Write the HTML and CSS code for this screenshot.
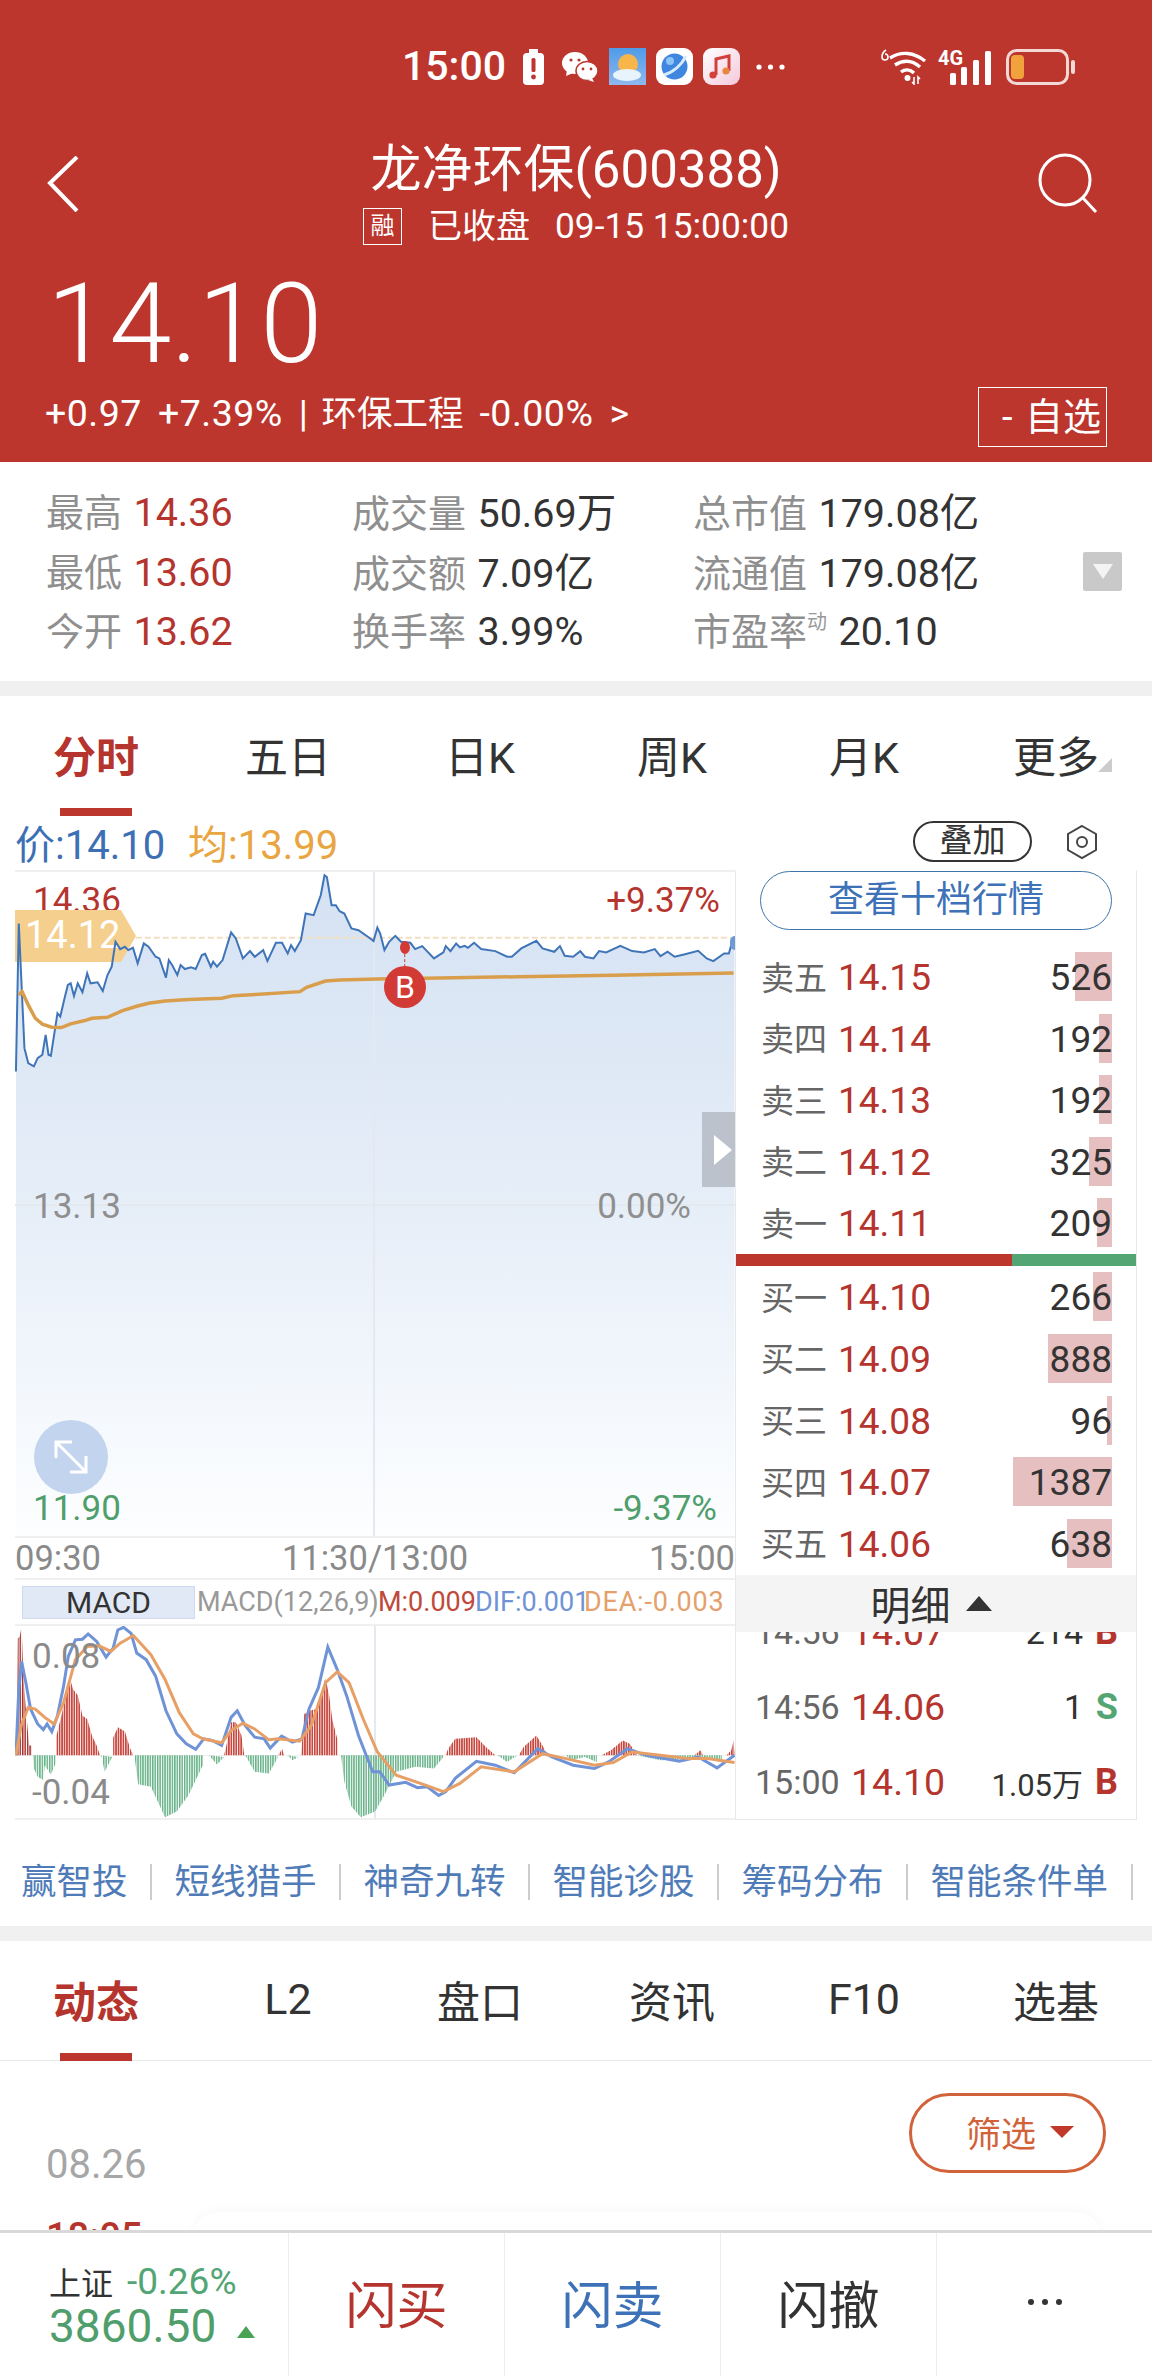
FILE: index.html
```html
<!DOCTYPE html>
<html lang="zh-CN">
<head>
<meta charset="utf-8">
<title>龙净环保(600388)</title>
<link rel="stylesheet" href="styles.css">
</head>
<body>
<div class="page">
  <header class="hero">
    <div class="status">
      <span class="clock">15:00</span>
      <svg class="ic-alert" viewBox="0 0 21 36"><rect x="0" y="4" width="21" height="32" rx="4" fill="#fff"/><rect x="6" y="0" width="9" height="4" fill="#fff"/><rect x="8.5" y="9" width="4" height="14" rx="1.5" fill="#bc362e"/><circle cx="10.5" cy="28" r="2.4" fill="#bc362e"/></svg>
      <svg class="ic-wechat" viewBox="0 0 36 30"><ellipse cx="13" cy="11" rx="13" ry="11" fill="#fff"/><path d="M5 18l-1 6 7-3z" fill="#fff"/><ellipse cx="25" cy="19" rx="11" ry="9.5" fill="#fff" stroke="#bc362e" stroke-width="1.5"/><path d="M30 26l2 4-6-2z" fill="#fff"/><circle cx="9" cy="8" r="1.6" fill="#bc362e"/><circle cx="17" cy="8" r="1.6" fill="#bc362e"/><circle cx="21" cy="17" r="1.4" fill="#bc362e"/><circle cx="29" cy="17" r="1.4" fill="#bc362e"/></svg>
      <svg class="ic-tile" viewBox="0 0 37 37"><defs><linearGradient id="sky" x1="0" y1="0" x2="0" y2="1"><stop offset="0" stop-color="#4f9be8"/><stop offset="1" stop-color="#8fb8ee"/></linearGradient></defs><rect width="37" height="37" fill="url(#sky)"/><circle cx="19" cy="16" r="10" fill="#f7b54a"/><ellipse cx="18" cy="27" rx="14" ry="6" fill="#e8f4fb"/></svg>
      <svg class="ic-tile" viewBox="0 0 37 37"><rect width="37" height="37" rx="9" fill="#fff"/><circle cx="18.5" cy="18.5" r="13" fill="#3f86e0"/><path d="M8 27C18 24 26 16 30 8" stroke="#d6ecfb" stroke-width="3" fill="none"/><circle cx="14" cy="13" r="4" fill="#8ac4f5"/></svg>
      <svg class="ic-tile" viewBox="0 0 37 37"><defs><linearGradient id="pk" x1="0" y1="0" x2="1" y2="1"><stop offset="0" stop-color="#fff"/><stop offset="1" stop-color="#f3c9dc"/></linearGradient></defs><rect width="37" height="37" rx="9" fill="url(#pk)"/><path d="M13 27V11l13-3v15" stroke="#d2403a" stroke-width="3" fill="none"/><circle cx="10" cy="27" r="3.6" fill="#d2403a"/><circle cx="23" cy="23" r="3.6" fill="#e8853f"/></svg>
      <svg class="ic-dots" viewBox="0 0 29 6"><circle cx="3" cy="3" r="2.6" fill="#fff"/><circle cx="14.5" cy="3" r="2.6" fill="#fff"/><circle cx="26" cy="3" r="2.6" fill="#fff"/></svg>
      <svg class="ic-wifi" viewBox="0 0 47 36"><path d="M9 9C20 2 33 3 44 12M14 16c8-5 17-5 25 2M20 23c4-3 9-3 13 1" stroke="#fff" stroke-width="3.4" fill="none"/><circle cx="26.500" cy="29" r="3" fill="#fff"/><path d="M33 28v7l-2-2M37 35v-7l2 2" stroke="#fff" stroke-width="1.600" fill="none"/><path d="M5 1C2 3 1 6 1 8a3 3 0 1 0 3-3" stroke="#fff" stroke-width="1.600" fill="none"/></svg>
      <span class="signal"><span class="net">4G</span><svg class="ic-bars" viewBox="0 0 41 34"><rect x="0" y="22" width="6" height="12" rx="1.500" fill="#fff"/><rect x="11" y="16" width="6" height="18" rx="1.500" fill="#fff"/><rect x="23" y="9" width="6" height="25" rx="1.500" fill="#fff"/><rect x="35" y="0" width="6" height="34" rx="1.500" fill="#fff"/></svg></span>
      <svg class="ic-battery" viewBox="0 0 70 36"><rect x="1.500" y="1.500" width="60" height="33" rx="9" fill="none" stroke="#f3d9d5" stroke-width="3"/><rect x="5" y="6" width="13" height="24" rx="4" fill="#f2a23c"/><rect x="65" y="11" width="4" height="14" rx="2" fill="#f3d9d5"/></svg>
    </div>
    <div class="nav">
      <svg class="ic-back" viewBox="0 0 33 56"><path d="M30 1L3 27l27 28" stroke="#fff" stroke-width="4" fill="none"/></svg>
      <div class="nav-mid">
        <h1 class="title">龙净环保(600388)</h1>
        <div class="sub"><span class="rong">融</span><span class="sub-state">已收盘</span><span class="sub-time">09-15 15:00:00</span></div>
      </div>
      <svg class="ic-search" viewBox="0 0 60 60"><circle cx="27" cy="27" r="25" stroke="#fff" stroke-width="3" fill="none"/><path d="M45 45l13 14" stroke="#fff" stroke-width="3"/></svg>
    </div>
    <div class="price">14.10</div>
    <div class="change-row">
      <span class="change"><span>+0.97</span><span>+7.39%</span><span>|</span><span class="change-cjk">环保工程</span><span>-0.00%</span><span>&gt;</span></span>
      <span class="watch">- 自选</span>
    </div>
  </header>

  <section class="stats">
    <div class="stats-grid">
      <div><span class="lab">最高</span> <span class="up">14.36</span></div>
      <div><span class="lab">成交量</span> <span class="val">50.69万</span></div>
      <div><span class="lab">总市值</span> <span class="val">179.08亿</span></div>
      <div><span class="lab">最低</span> <span class="up">13.60</span></div>
      <div><span class="lab">成交额</span> <span class="val">7.09亿</span></div>
      <div><span class="lab">流通值</span> <span class="val">179.08亿</span></div>
      <div><span class="lab">今开</span> <span class="up">13.62</span></div>
      <div><span class="lab">换手率</span> <span class="val">3.99%</span></div>
      <div><span class="lab">市盈率</span><sup class="sup">动</sup> <span class="val">20.10</span></div>
    </div>
    <div class="stats-more"><i class="tri-down"></i></div>
  </section>
  <div class="band"></div>

  <nav class="tabs">
    <span class="tab active">分时</span><span class="tab">五日</span><span class="tab">日K</span><span class="tab">周K</span><span class="tab">月K</span><span class="tab more">更多</span>
  </nav>

  <div class="legend">
    <span class="leg-price">价:14.10</span>
    <span class="leg-avg">均:13.99</span>
    <span class="overlay-btn">叠加</span>
    <svg class="ic-hex" viewBox="0 0 34 36"><path d="M17 2l14 8v16l-14 8-14-8V10z" fill="none" stroke="#444" stroke-width="2"/><circle cx="17" cy="18" r="5" fill="none" stroke="#444" stroke-width="2"/></svg>
  </div>

  <div class="board">
    <div class="left">
      <div class="main-chart">
        <svg class="plot" viewBox="32 30 1526 1998" preserveAspectRatio="none">
          <defs>
            <linearGradient id="area" gradientUnits="userSpaceOnUse" x1="0" y1="40" x2="0" y2="2028"><stop offset="0" stop-color="#d5e2f3"/><stop offset=".5" stop-color="#e6eef8"/><stop offset="1" stop-color="#fdfeff"/></linearGradient>
          </defs>
          <polygon fill="url(#area)" points="34,2028 34,630 40,185 52,560 60,605 72,615 80,590 90,580 97,520 103,580 108,583 122,455 128,465 137,410 144,370 150,365 157,403 165,365 175,392 185,335 192,365 207,362 218,388 228,340 237,315 245,240 255,262 265,255 272,265 282,258 292,305 305,245 315,255 330,285 338,290 352,348 358,295 365,310 376,340 383,310 392,322 405,317 415,322 428,280 435,276 447,315 452,300 460,315 472,295 490,212 500,230 515,290 530,268 540,285 558,265 567,298 585,243 598,243 610,275 617,250 625,268 638,235 648,155 665,160 680,100 688,40 693,45 703,130 712,130 720,148 730,155 745,200 760,205 785,230 792,238 800,197 806,215 815,265 825,240 838,222 850,240 870,243 880,262 895,253 920,290 940,272 945,253 955,268 967,245 975,257 985,252 992,258 1005,243 1020,262 1050,268 1075,285 1085,285 1105,260 1137,237 1150,260 1175,270 1187,253 1197,282 1215,285 1230,268 1240,285 1258,290 1270,268 1285,272 1315,252 1340,268 1365,272 1388,262 1400,283 1415,270 1430,285 1450,278 1480,267 1498,290 1512,298 1535,275 1545,275 1552,240 1557,235 1557,2028"/>
          <path class="grid-line" d="M32 1032H1558M793 30V2028"/>
          <path class="dash-line" d="M288 228H1557"/>
        </svg>
        <span class="chart-lab top-left up">14.36</span>
        <span class="chart-lab top-right up">+9.37%</span>
        <span class="chart-lab mid-left grey">13.13</span>
        <span class="chart-lab mid-right grey">0.00%</span>
        <span class="chart-lab low-left down">11.90</span>
        <span class="chart-lab low-right down">-9.37%</span>
        <span class="price-tag">14.12</span>
        <svg class="plot plot-over" viewBox="32 30 1526 1998" preserveAspectRatio="none">
          <polyline class="line-price" points="34,630 40,185 52,560 60,605 72,615 80,590 90,580 97,520 103,580 108,583 122,455 128,465 137,410 144,370 150,365 157,403 165,365 175,392 185,335 192,365 207,362 218,388 228,340 237,315 245,240 255,262 265,255 272,265 282,258 292,305 305,245 315,255 330,285 338,290 352,348 358,295 365,310 376,340 383,310 392,322 405,317 415,322 428,280 435,276 447,315 452,300 460,315 472,295 490,212 500,230 515,290 530,268 540,285 558,265 567,298 585,243 598,243 610,275 617,250 625,268 638,235 648,155 665,160 680,100 688,40 693,45 703,130 712,130 720,148 730,155 745,200 760,205 785,230 792,238 800,197 806,215 815,265 825,240 838,222 850,240 870,243 880,262 895,253 920,290 940,272 945,253 955,268 967,245 975,257 985,252 992,258 1005,243 1020,262 1050,268 1075,285 1085,285 1105,260 1137,237 1150,260 1175,270 1187,253 1197,282 1215,285 1230,268 1240,285 1258,290 1270,268 1285,272 1315,252 1340,268 1365,272 1388,262 1400,283 1415,270 1430,285 1450,278 1480,267 1498,290 1512,298 1535,275 1545,275 1552,240"/>
          <polyline class="line-avg" points="40,400 47,390 60,430 75,470 90,488 110,497 130,498 150,487 180,477 195,470 228,467 260,447 290,434 315,425 350,418 400,414 470,410 495,402 550,398 636,390 650,377 690,358 720,355 800,352 900,350 1100,345 1300,341 1555,334"/>
          <path class="marker-stem" d="M858 262V320"/>
        </svg>
        <i class="end-dot"></i>
        <i class="marker-dot"></i>
        <span class="marker-b">B</span>
        <span class="side-tab"><i class="tri-right"></i></span>
        <svg class="ic-expand" viewBox="0 0 74 74"><circle cx="37" cy="37" r="37" fill="#c3d5ee"/><path d="M22 38V22h16M22 22l30 30M52 36v16H36" stroke="#fff" stroke-width="3" fill="none"/></svg>
      </div>
      <div class="times"><span>09:30</span><span>11:30/13:00</span><span>15:00</span></div>
      <div class="macd-head">
        <span class="macd-tab">MACD</span>
        <span class="m-grey">MACD(12,26,9)</span><span class="m-red">M:0.009</span><span class="m-blue">DIF:0.001</span><span class="m-orange">DEA:-0.003</span>
      </div>
      <div class="macd-plot">
        <svg class="plot" viewBox="32 258 1526 582" preserveAspectRatio="none">
          <defs>
            <pattern id="barDark" patternUnits="userSpaceOnUse" width="5.200" height="10"><rect width="3.200" height="10" fill="#a8322e"/></pattern>
            <pattern id="barRed" patternUnits="userSpaceOnUse" width="5.200" height="10"><rect width="3.600" height="10" fill="#c8483f"/></pattern>
            <pattern id="barGreen" patternUnits="userSpaceOnUse" width="5.200" height="10"><rect width="3.200" height="10" fill="#67b388"/></pattern>
          </defs>
          <path class="grid-line" d="M795 258V840"/>
          <path class="zero-line" d="M32 651H1558"/>
          <polygon fill="url(#barDark)" points="36,650 38,295 42,290 46,260 50,420 56,525 62,620 68,620 68,650"/>
          <g fill="url(#barRed)">
            <polygon points="120,650 120,590 132,520 142,440 148,415 155,450 165,468 175,530 185,540 195,590 205,620 212,650"/>
            <polygon points="240,650 240,597 250,565 265,578 275,625 282,650"/>
            <polygon points="475,650 480,620 490,550 500,550 512,590 518,650"/>
            <polygon points="590,650 598,630 602,650"/>
            <polygon points="638,650 645,525 660,513 672,510 680,470 690,415 698,470 705,545 715,600 715,650"/>
            <polygon points="945,650 950,630 965,600 1010,595 1030,625 1050,650"/>
            <polygon points="1100,650 1110,625 1137,590 1150,620 1160,650"/>
            <polygon points="1275,650 1295,635 1320,605 1335,615 1350,650"/>
            <polygon points="1472,650 1485,635 1490,650"/>
            <polygon points="1540,650 1550,635 1555,605 1557,650"/>
          </g>
          <g fill="url(#barGreen)">
            <polygon points="70,650 72,690 80,715 92,725 95,680 108,708 118,675 118,650"/>
            <polygon points="215,650 222,700 238,655"/>
            <polygon points="285,650 293,738 320,745 350,838 375,820 400,770 430,680 430,650"/>
            <polygon points="443,650 460,678 475,655"/>
            <polygon points="520,650 540,700 570,705 588,660 588,650"/>
            <polygon points="610,650 620,665 632,655"/>
            <polygon points="723,650 730,730 745,805 765,838 795,820 815,770 840,700 880,685 920,690 940,655 940,650"/>
            <polygon points="1055,650 1075,670 1095,652"/>
            <polygon points="1200,650 1210,665 1240,655 1265,670 1265,650"/>
            <polygon points="1350,650 1400,665 1500,660 1530,672 1530,650"/>
          </g>
          <polyline class="line-dif" points="34,650 40,450 46,365 55,430 65,510 80,555 92,572 100,555 110,578 122,530 135,440 145,350 160,300 175,298 187,282 205,305 225,352 240,325 250,270 262,262 278,280 290,340 310,360 330,410 352,515 375,585 395,615 415,632 432,600 450,605 470,620 490,535 503,515 520,560 540,595 560,600 573,628 597,592 620,610 640,600 655,510 675,445 695,322 715,390 735,470 760,590 790,700 805,700 825,740 860,732 885,748 905,745 930,772 945,760 965,720 1010,668 1050,680 1090,703 1140,630 1170,655 1215,680 1260,690 1290,670 1330,630 1370,650 1440,668 1480,655 1520,688 1557,650"/>
          <polyline class="line-dea" points="34,650 45,560 60,505 75,510 95,535 115,555 135,490 160,360 185,320 210,318 235,335 255,310 283,287 320,345 350,420 380,520 410,585 430,600 470,612 490,575 515,553 540,570 570,603 590,600 635,607 660,560 690,430 715,397 740,430 770,540 800,640 840,710 905,742 940,760 975,735 1020,685 1090,700 1150,645 1200,660 1260,680 1300,672 1340,640 1400,650 1460,660 1500,660 1557,672"/>
        </svg>
        <span class="macd-lab macd-hi">0.08</span>
        <span class="macd-lab macd-lo">-0.04</span>
      </div>
    </div>

    <aside class="right">
      <div class="ten-btn">查看十档行情</div>
      <div class="book sells">
        <div class="order"><span class="o-lab">卖五</span><span class="o-price">14.15</span><i class="o-bar" style="width:37px"></i><span class="o-vol">526</span></div>
        <div class="order"><span class="o-lab">卖四</span><span class="o-price">14.14</span><i class="o-bar" style="width:13px"></i><span class="o-vol">192</span></div>
        <div class="order"><span class="o-lab">卖三</span><span class="o-price">14.13</span><i class="o-bar" style="width:13px"></i><span class="o-vol">192</span></div>
        <div class="order"><span class="o-lab">卖二</span><span class="o-price">14.12</span><i class="o-bar" style="width:23px"></i><span class="o-vol">325</span></div>
        <div class="order"><span class="o-lab">卖一</span><span class="o-price">14.11</span><i class="o-bar" style="width:15px"></i><span class="o-vol">209</span></div>
      </div>
      <div class="ratio"><i class="ratio-red"></i><i class="ratio-green"></i></div>
      <div class="book buys">
        <div class="order"><span class="o-lab">买一</span><span class="o-price">14.10</span><i class="o-bar" style="width:19px"></i><span class="o-vol">266</span></div>
        <div class="order"><span class="o-lab">买二</span><span class="o-price">14.09</span><i class="o-bar" style="width:64px"></i><span class="o-vol">888</span></div>
        <div class="order"><span class="o-lab">买三</span><span class="o-price">14.08</span><i class="o-bar" style="width:5px"></i><span class="o-vol">96</span></div>
        <div class="order"><span class="o-lab">买四</span><span class="o-price">14.07</span><i class="o-bar" style="width:99px"></i><span class="o-vol">1387</span></div>
        <div class="order"><span class="o-lab">买五</span><span class="o-price">14.06</span><i class="o-bar" style="width:45px"></i><span class="o-vol">638</span></div>
      </div>
      <div class="detail-head">明细<i class="tri-up"></i></div>
      <div class="details">
        <div class="deal"><span class="d-time">14:56</span><span class="d-price">14.07</span><span class="d-vol">214</span><b class="d-side buy">B</b></div>
        <div class="deal"><span class="d-time">14:56</span><span class="d-price">14.06</span><span class="d-vol">1</span><b class="d-side sell">S</b></div>
        <div class="deal"><span class="d-time">15:00</span><span class="d-price">14.10</span><span class="d-vol small">1.05万</span><b class="d-side buy">B</b></div>
      </div>
    </aside>
  </div>

  <div class="links">
    <span>赢智投</span><span>短线猎手</span><span>神奇九转</span><span>智能诊股</span><span>筹码分布</span><span>智能条件单</span>
  </div>
  <div class="band band-2"></div>

  <nav class="tabs tabs-2">
    <span class="tab active">动态</span><span class="tab">L2</span><span class="tab">盘口</span><span class="tab">资讯</span><span class="tab">F10</span><span class="tab">选基</span>
  </nav>

  <section class="feed">
    <div class="feed-top">
      <span class="feed-date">08.26</span>
      <span class="filter">筛选<i class="tri-filter"></i></span>
    </div>
    <div class="feed-row">
      <span class="feed-time">18:05</span>
      <div class="feed-card"></div>
    </div>
  </section>

  <footer class="dock">
    <div class="index">
      <div class="idx-top"><span class="idx-name">上证</span><span class="idx-pct">-0.26%</span></div>
      <div class="idx-val"><span>3860.50</span><i class="tri-idx"></i></div>
    </div>
    <div class="dock-btn flash-buy">闪买</div>
    <div class="dock-btn flash-sell">闪卖</div>
    <div class="dock-btn flash-undo">闪撤</div>
    <div class="dock-btn dock-more">
      <svg class="ic-more" viewBox="0 0 34 6"><circle cx="3" cy="3" r="3" fill="#333"/><circle cx="17" cy="3" r="3" fill="#333"/><circle cx="31" cy="3" r="3" fill="#333"/></svg>
    </div>
  </footer>
</div>
</body>
</html>
```
FILE: styles.css
```css
* { box-sizing: border-box; }
html, body { margin: 0; padding: 0; background: #fff; }
body { font-family: Roboto, "Noto Sans CJK SC", sans-serif; color: #333; }
.page { width: 1152px; height: 2376px; overflow: hidden; }
i { display: block; font-style: normal; }

/* hero */
.hero { height: 462px; background: #bc362e; color: #fff; padding-top: 48px; }
.status { display: flex; align-items: center; height: 37px; padding-left: 402px; }
.clock { font-size: 41px; font-weight: 500; width: 104px; line-height: 37px; white-space: nowrap; }
.status svg { display: block; flex: none; }
.ic-alert { width: 21px; height: 36px; margin-left: 17px; }
.ic-wechat { width: 36px; height: 30px; margin: 0 11px 0 18px; }
.ic-tile { width: 37px; height: 37px; margin-right: 10px; }
.ic-dots { width: 29px; height: 6px; margin-left: 6px; }
.ic-wifi { width: 47px; height: 36px; margin-left: 96px; }
.signal { position: relative; display: block; width: 53px; height: 36px; margin-left: 10px; }
.net { position: absolute; left: 0; top: -1px; font-size: 20px; font-weight: 700; line-height: 20px; }
.ic-bars { position: absolute; left: 12px; top: 2px; width: 41px; height: 34px; }
.ic-battery { width: 70px; height: 36px; margin-left: 15px; }

.nav { display: grid; grid-template-columns: 1fr auto 1fr; align-items: start; padding: 55px 47px 0; }
.ic-back { width: 33px; height: 56px; margin-top: 16px; }
.ic-search { width: 60px; height: 60px; margin: 13px 7px 0 0; justify-self: end; }
.nav-mid { display: flex; flex-direction: column; align-items: center; }
.title { margin: 0; font-size: 51px; font-weight: 400; line-height: 60px; white-space: nowrap; }
.sub { display: flex; align-items: center; font-size: 34px; line-height: 40px; margin-top: 6px; white-space: nowrap; }
.rong { width: 39px; height: 37px; border: 1px solid #fff; font-size: 24px; line-height: 35px; text-align: center; }
.sub-state { margin: 0 25px 0 26px; }
.sub-time { font-size: 35.300px; }
.price { font-size: 112px; line-height: 120px; font-weight: 300; padding-left: 47px; margin-top: 18px; }
.change-row { display: flex; align-items: center; justify-content: space-between; height: 60px; margin-top: 3px; padding: 0 45px; }
.change { display: flex; align-items: baseline; gap: 16px; margin-bottom: 13px; font-size: 37.500px; letter-spacing: .5px; white-space: nowrap; }
.change-cjk { font-size: 35.500px; margin-left: -3px; letter-spacing: 0; }
.watch { width: 129px; height: 60px; padding-right: 5px; border: 1px solid #fff; font-size: 38px; line-height: 58px; text-align: right; word-spacing: 3px; }

/* stats */
.stats { display: flex; height: 219px; padding: 18px 30px 0 46px; }
.stats-grid { flex: 1; display: grid; grid-template-columns: 306px 341px 1fr; grid-auto-rows: 59.5px; font-size: 38px; align-items: center; white-space: nowrap; }
.lab { color: #8f8f8f; }
.up { color: #b5342e; font-size: 39.500px; margin-left: 2px; }
.val { color: #333; font-size: 39.500px; margin-left: 2px; }
.chart-lab.up { margin-left: 0; font-size: 35px; }
.down { color: #4f9e6c; }
.grey { color: #8f8f8f; }
.sup { color: #999; font-size: 20px; vertical-align: 16px; line-height: 0; }
.stats-more { width: 39px; height: 39px; margin-top: 72px; background: #c9c9c9; border-radius: 2px; display: flex; align-items: center; justify-content: center; }
.tri-down { width: 0; height: 0; border-left: 10px solid transparent; border-right: 10px solid transparent; border-top: 15px solid #f4f4f4; }
.band { height: 15px; background: #f0f0f0; }

/* tabs */
.tabs { display: flex; height: 120px; font-size: 43px; color: #333; }
.tab { position: relative; flex: 1; display: flex; align-items: center; justify-content: center; padding-bottom: 4px; }
.tab.active { color: #b5342e; font-weight: 700; }
.tab.active::after { content: ""; position: absolute; left: 60px; width: 72px; bottom: 0; height: 8px; background: #bc362e; }
.tab.more::after { content: ""; position: absolute; right: 40px; top: 62px; border-left: 14px solid transparent; border-bottom: 14px solid #ccc; }
.tabs-2 { border-bottom: 1px solid #e8e8e8; }
.tabs-2 .tab.active::after { bottom: -1px; }

/* legend */
.legend { display: flex; align-items: center; height: 54px; padding: 0 0 3px 15px; font-size: 40px; white-space: nowrap; }
.leg-price { color: #3d6fb4; width: 173px; }
.leg-avg { color: #e9a53f; width: 725px; }
.overlay-btn { width: 119px; height: 41px; border: 2px solid #333; border-radius: 21px; font-size: 33px; line-height: 35px; text-align: center; color: #333; }
.ic-hex { width: 34px; height: 36px; margin-left: 33px; }

/* board */
.board { display: flex; height: 950px; margin-left: 15px; width: 1122px; }
.left { width: 720px; flex: none; }
.main-chart { position: relative; height: 666px; border-top: 2px solid #f0f0f0; overflow: hidden; }
.plot { display: block; width: 100%; height: 100%; }
.plot-over { position: absolute; left: 0; top: 0; }
.grid-line { stroke: #e4e9f0; stroke-width: 2px; fill: none; vector-effect: non-scaling-stroke; }
.zero-line { stroke: #eee; stroke-width: 1px; vector-effect: non-scaling-stroke; }
.dash-line { stroke: #f2dfc2; stroke-width: 2px; stroke-dasharray: 6 3; fill: none; vector-effect: non-scaling-stroke; }
.line-price { fill: none; stroke: #3f75b8; stroke-width: 2px; vector-effect: non-scaling-stroke; }
.line-avg { fill: none; stroke: #d99e4c; stroke-width: 3.500px; vector-effect: non-scaling-stroke; }
.marker-stem { stroke: #d23a35; stroke-width: 1px; stroke-dasharray: 3 2; vector-effect: non-scaling-stroke; }
.line-dif { fill: none; stroke: #6f93d6; stroke-width: 3px; vector-effect: non-scaling-stroke; }
.line-dea { fill: none; stroke: #e89f66; stroke-width: 3px; vector-effect: non-scaling-stroke; }

.chart-lab { position: absolute; font-size: 35px; line-height: 40px; }
.top-left { left: 18px; top: 9px; }
.top-right { right: 15px; top: 9px; }
.mid-left { left: 18px; top: 315px; }
.mid-right { right: 44px; top: 315px; }
.low-left { left: 18px; top: 617px; }
.low-right { right: 18px; top: 617px; }
.price-tag { position: absolute; left: 0; top: 38px; width: 121px; height: 52px; padding-left: 10px; font-size: 38px; line-height: 50px; color: #fff; background: #f5cf8d; clip-path: polygon(0 0, 106px 0, 121px 50%, 106px 100%, 0 100%); }
.end-dot { position: absolute; right: 0; top: 64px; width: 5px; height: 14px; border-radius: 5px 0 0 5px; background: #6f9ad6; }
.marker-dot { position: absolute; left: 385px; top: 69px; width: 10px; height: 13px; border-radius: 50%; background: #d23a35; }
.marker-b { position: absolute; left: 369px; top: 94px; width: 42px; height: 42px; border-radius: 50%; background: #d23a35; color: #fff; font-size: 32px; line-height: 42px; text-align: center; }
.side-tab { position: absolute; right: 0; top: 240px; width: 33px; height: 75px; background: #bcc2cc; display: flex; align-items: center; justify-content: flex-end; padding-right: 3px; }
.tri-right { width: 0; height: 0; border-top: 15px solid transparent; border-bottom: 15px solid transparent; border-left: 18px solid #fff; }
.ic-expand { position: absolute; left: 19px; top: 548px; width: 74px; height: 74px; }

.times { display: flex; justify-content: space-between; height: 42px; font-size: 34.500px; line-height: 40px; color: #8a8a8a; border-top: 2px solid #f0f0f0; }
.macd-head { display: flex; align-items: center; height: 48px; border-top: 2px solid #f0f0f0; border-bottom: 2px solid #f0f0f0; font-size: 27px; white-space: nowrap; }
.macd-tab { width: 173px; height: 33px; margin: 0 2px 0 7px; background: #e2e9f6; border: 1px solid #cfdaef; color: #333; font-size: 30px; line-height: 31px; text-align: center; }
.m-grey { color: #999; width: 181px; }
.m-red { color: #c0493a; width: 97px; }
.m-blue { color: #6f93d6; width: 109px; }
.m-orange { color: #e5a06c; letter-spacing: .8px; }
.macd-plot { position: relative; height: 194px; border-bottom: 2px solid #f0f0f0; }
.macd-lab { position: absolute; left: 17px; font-size: 35px; line-height: 40px; color: #8a8a8a; }
.macd-hi { top: 11px; }
.macd-lo { top: 147px; }

/* right panel */
.right { width: 402px; flex: none; border: 1px solid #e8e8e8; border-top-color: #fff; display: flex; flex-direction: column; overflow: hidden; }
.ten-btn { height: 59px; margin: 0 24px; border: 1px solid #3f75a8; border-radius: 30px; color: #3d72b8; font-size: 36px; line-height: 57px; text-align: center; }
.book { display: flex; flex-direction: column; gap: 12.6px; padding: 0 24px; }
.sells { margin-top: 22px; }
.order { position: relative; display: flex; align-items: center; height: 49px; padding-top: 2px; font-size: 37px; }
.o-lab { font-size: 33px; color: #666; width: 78px; padding: 0 0 4px 1px; }
.o-price { color: #b5342e; }
.o-bar { position: absolute; right: 0; top: 0; bottom: 0; background: #e6bfc0; }
.o-vol { position: relative; margin-left: auto; color: #333; }
.ratio { display: flex; height: 12px; margin-top: 7px; }
.ratio-red { width: 276px; background: #bc362e; }
.ratio-green { flex: 1; background: #53a574; }
.buys { margin-top: 6px; }
.detail-head { display: flex; align-items: center; justify-content: center; height: 57px; margin-top: 7px; background: #f4f4f4; font-size: 40px; color: #333; position: relative; z-index: 1; padding-right: 10px; }
.tri-up { width: 0; height: 0; margin-left: 15px; border-left: 13px solid transparent; border-right: 13px solid transparent; border-bottom: 15px solid #333; }
.details { height: 186px; overflow: hidden; padding: 0 18px 0 19px; }
.deal { display: flex; align-items: center; height: 75px; }
.deal:first-child { margin-top: -37px; }
.d-time { font-size: 34px; color: #666; width: 96px; }
.d-price { font-size: 37.500px; color: #b5342e; }
.d-vol { margin-left: auto; font-size: 34px; color: #333; }
.d-vol.small { font-size: 31px; }
.d-side { font-size: 36px; width: 35px; text-align: right; }
.d-side.buy { color: #b5342e; }
.d-side.sell { color: #53a574; }

/* links */
.links { display: flex; height: 106px; padding: 44px 0 0 21px; font-size: 35.500px; line-height: 36px; color: #4f7cb8; white-space: nowrap; }
.links span { padding-right: 22.500px; margin-right: 22.500px; border-right: 2px solid #ccc; height: 36px; }

/* feed */
.feed { height: 169px; overflow: hidden; padding: 32px 46px 0 46px; }
.feed-top { display: flex; justify-content: space-between; align-items: flex-start; }
.feed-date { margin-top: 52px; font-size: 40px; line-height: 40px; color: #a6a6a6; }
.filter { display: flex; align-items: center; width: 197px; height: 80px; padding: 0 0 3px 54px; border: 3px solid #d2623a; border-radius: 40px; font-size: 35px; color: #d2623a; }
.tri-filter { width: 0; height: 0; margin-left: 14px; border-left: 12px solid transparent; border-right: 12px solid transparent; border-top: 12px solid #c0392b; }
.feed-row { display: flex; margin-top: 27px; }
.feed-time { width: 148px; font-size: 38px; font-weight: 500; line-height: 50px; color: #b5342e; flex: none; }
.feed-card { flex: 1; height: 200px; margin-right: 6px; border-radius: 24px; box-shadow: 0 0 14px rgba(0,0,0,.04); }

/* dock */
.dock { display: grid; grid-template-columns: 288px repeat(4, 1fr); height: 146px; background: #fff; border-top: 3px solid #d9d9d9; }
.index { padding: 30px 0 0 49px; }
.idx-top { display: flex; align-items: center; height: 36px; font-size: 32px; white-space: nowrap; }
.idx-name { color: #333; }
.idx-pct { color: #53a574; margin-left: 14px; font-size: 37px; }
.idx-val { display: flex; align-items: center; height: 50px; margin-top: 2px; font-size: 46px; color: #4f9e6c; white-space: nowrap; }
.tri-idx { width: 0; height: 0; margin: 12px 0 0 21px; border-left: 9px solid transparent; border-right: 9px solid transparent; border-bottom: 12px solid #4aa255; }
.dock-btn { display: flex; align-items: center; justify-content: center; border-left: 1px solid #eee; font-size: 51px; padding-bottom: 6px; }
.flash-buy { color: #b5342e; }
.flash-sell { color: #3d72b8; }
.flash-undo { color: #333; }
.ic-more { width: 34px; height: 6px; }
```
